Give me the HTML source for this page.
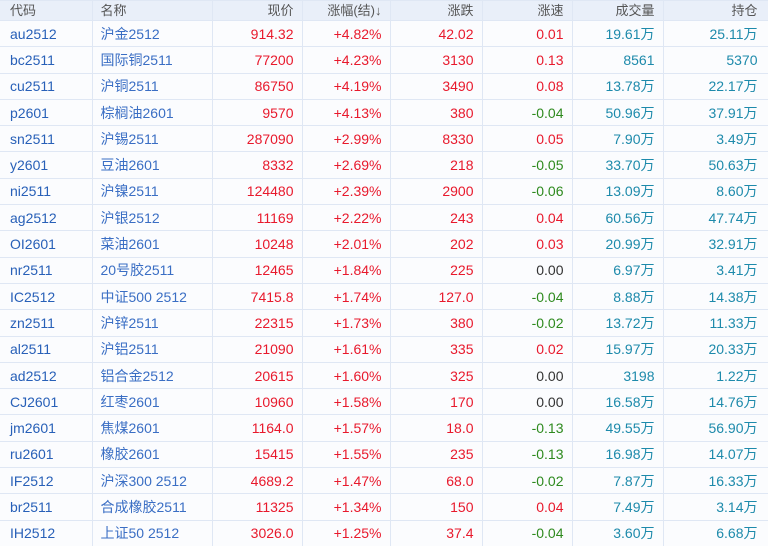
<!DOCTYPE html>
<html><head><meta charset="utf-8"><style>
html,body{margin:0;padding:0;background:#fff;width:768px;height:546px;overflow:hidden}
table{border-collapse:collapse;table-layout:fixed;width:769px;font-family:"Liberation Sans","Noto Sans CJK SC",sans-serif;font-size:14px;line-height:16px}
td,th{border:1px solid #dfe7f4;padding:0 8px;white-space:nowrap;overflow:hidden;vertical-align:middle}
th{height:19px;background:#e9eff9;color:#555;font-weight:normal;font-size:13px;text-align:right}
th.l{text-align:left}
td{height:25.3px;text-align:right;background:#fbfcfe}
td.c{text-align:left;color:#2860b8}
td.n{text-align:left;color:#3a6ec4}
.r{color:#e8192c}.g{color:#2e8a1e}.k{color:#333}.t{color:#1d8aab}
tr td:first-child,tr th:first-child{border-left:none;padding-left:10px}
tr td:last-child,tr th:last-child{padding-right:11px}
</style></head><body>
<table>
<colgroup><col style="width:92px"><col style="width:120px"><col style="width:90px"><col style="width:88px"><col style="width:92px"><col style="width:90px"><col style="width:91px"><col style="width:106px"></colgroup>
<tr><th class="l">代码</th><th class="l">名称</th><th>现价</th><th>涨幅(结)↓</th><th>涨跌</th><th>涨速</th><th>成交量</th><th>持仓</th></tr>
<tr><td class="c">au2512</td><td class="n">沪金2512</td><td class="r">914.32</td><td class="r">+4.82%</td><td class="r">42.02</td><td class="r">0.01</td><td class="t">19.61万</td><td class="t">25.11万</td></tr>
<tr><td class="c">bc2511</td><td class="n">国际铜2511</td><td class="r">77200</td><td class="r">+4.23%</td><td class="r">3130</td><td class="r">0.13</td><td class="t">8561</td><td class="t">5370</td></tr>
<tr><td class="c">cu2511</td><td class="n">沪铜2511</td><td class="r">86750</td><td class="r">+4.19%</td><td class="r">3490</td><td class="r">0.08</td><td class="t">13.78万</td><td class="t">22.17万</td></tr>
<tr><td class="c">p2601</td><td class="n">棕榈油2601</td><td class="r">9570</td><td class="r">+4.13%</td><td class="r">380</td><td class="g">-0.04</td><td class="t">50.96万</td><td class="t">37.91万</td></tr>
<tr><td class="c">sn2511</td><td class="n">沪锡2511</td><td class="r">287090</td><td class="r">+2.99%</td><td class="r">8330</td><td class="r">0.05</td><td class="t">7.90万</td><td class="t">3.49万</td></tr>
<tr><td class="c">y2601</td><td class="n">豆油2601</td><td class="r">8332</td><td class="r">+2.69%</td><td class="r">218</td><td class="g">-0.05</td><td class="t">33.70万</td><td class="t">50.63万</td></tr>
<tr><td class="c">ni2511</td><td class="n">沪镍2511</td><td class="r">124480</td><td class="r">+2.39%</td><td class="r">2900</td><td class="g">-0.06</td><td class="t">13.09万</td><td class="t">8.60万</td></tr>
<tr><td class="c">ag2512</td><td class="n">沪银2512</td><td class="r">11169</td><td class="r">+2.22%</td><td class="r">243</td><td class="r">0.04</td><td class="t">60.56万</td><td class="t">47.74万</td></tr>
<tr><td class="c">OI2601</td><td class="n">菜油2601</td><td class="r">10248</td><td class="r">+2.01%</td><td class="r">202</td><td class="r">0.03</td><td class="t">20.99万</td><td class="t">32.91万</td></tr>
<tr><td class="c">nr2511</td><td class="n">20号胶2511</td><td class="r">12465</td><td class="r">+1.84%</td><td class="r">225</td><td class="k">0.00</td><td class="t">6.97万</td><td class="t">3.41万</td></tr>
<tr><td class="c">IC2512</td><td class="n">中证500 2512</td><td class="r">7415.8</td><td class="r">+1.74%</td><td class="r">127.0</td><td class="g">-0.04</td><td class="t">8.88万</td><td class="t">14.38万</td></tr>
<tr><td class="c">zn2511</td><td class="n">沪锌2511</td><td class="r">22315</td><td class="r">+1.73%</td><td class="r">380</td><td class="g">-0.02</td><td class="t">13.72万</td><td class="t">11.33万</td></tr>
<tr><td class="c">al2511</td><td class="n">沪铝2511</td><td class="r">21090</td><td class="r">+1.61%</td><td class="r">335</td><td class="r">0.02</td><td class="t">15.97万</td><td class="t">20.33万</td></tr>
<tr><td class="c">ad2512</td><td class="n">铝合金2512</td><td class="r">20615</td><td class="r">+1.60%</td><td class="r">325</td><td class="k">0.00</td><td class="t">3198</td><td class="t">1.22万</td></tr>
<tr><td class="c">CJ2601</td><td class="n">红枣2601</td><td class="r">10960</td><td class="r">+1.58%</td><td class="r">170</td><td class="k">0.00</td><td class="t">16.58万</td><td class="t">14.76万</td></tr>
<tr><td class="c">jm2601</td><td class="n">焦煤2601</td><td class="r">1164.0</td><td class="r">+1.57%</td><td class="r">18.0</td><td class="g">-0.13</td><td class="t">49.55万</td><td class="t">56.90万</td></tr>
<tr><td class="c">ru2601</td><td class="n">橡胶2601</td><td class="r">15415</td><td class="r">+1.55%</td><td class="r">235</td><td class="g">-0.13</td><td class="t">16.98万</td><td class="t">14.07万</td></tr>
<tr><td class="c">IF2512</td><td class="n">沪深300 2512</td><td class="r">4689.2</td><td class="r">+1.47%</td><td class="r">68.0</td><td class="g">-0.02</td><td class="t">7.87万</td><td class="t">16.33万</td></tr>
<tr><td class="c">br2511</td><td class="n">合成橡胶2511</td><td class="r">11325</td><td class="r">+1.34%</td><td class="r">150</td><td class="r">0.04</td><td class="t">7.49万</td><td class="t">3.14万</td></tr>
<tr><td class="c">IH2512</td><td class="n">上证50 2512</td><td class="r">3026.0</td><td class="r">+1.25%</td><td class="r">37.4</td><td class="g">-0.04</td><td class="t">3.60万</td><td class="t">6.68万</td></tr>
</table>
</body></html>
